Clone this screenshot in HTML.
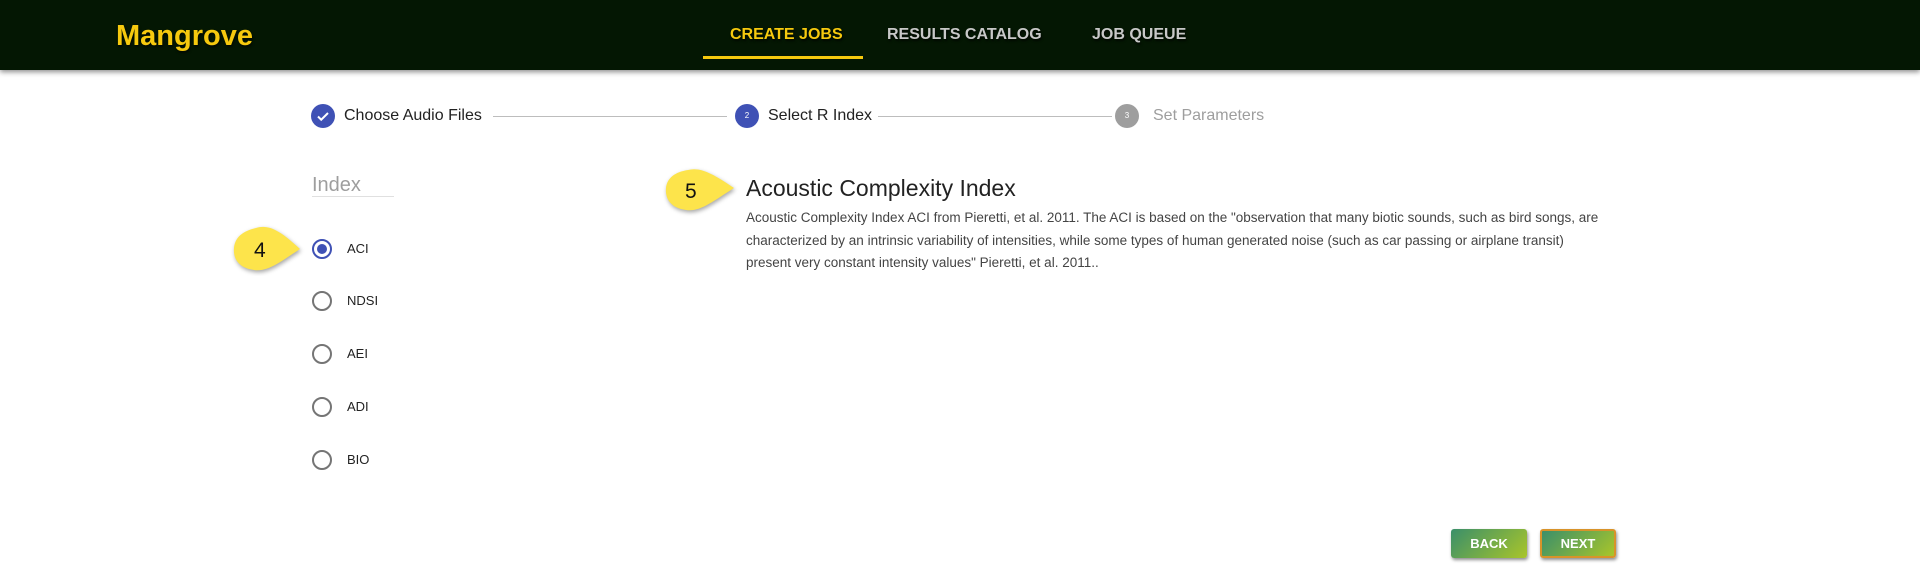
<!DOCTYPE html>
<html><head><meta charset="utf-8"><style>
*{margin:0;padding:0;box-sizing:border-box}
body{width:1920px;height:588px;background:#fff;font-family:"Liberation Sans",sans-serif;position:relative;overflow:hidden}
.hdr{position:absolute;left:0;top:0;width:1920px;height:70px;background:#041703;box-shadow:0 2px 5px rgba(0,0,0,.45)}
.logo{position:absolute;left:116px;top:20px;font-size:29px;font-weight:bold;color:#f6c90e;text-shadow:1px 2px 2px rgba(0,0,0,.6)}
.nav{position:absolute;top:26px;font-size:16px;font-weight:bold;color:#c8c8c8;text-shadow:1px 2px 2px rgba(0,0,0,.7)}
.ul{position:absolute;left:703px;top:56px;width:160px;height:3px;background:#f6c90e}
.ab{position:absolute}
.circ{position:absolute;width:24px;height:24px;border-radius:50%;color:#fff;font-size:8px;text-align:center;line-height:24px}
.step{position:absolute;top:107px;font-size:16px;color:#222}
.line{position:absolute;top:116px;height:1px;background:#bdbdbd}
.radio{position:absolute;left:312px;width:20px;height:20px;border:2px solid #757575;border-radius:50%}
.rl{position:absolute;left:347px;font-size:13px;color:#222}
.btn{position:absolute;top:529px;width:76px;height:29px;border-radius:3px;background:linear-gradient(135deg,#3a8f6a,#a9c52a);color:#fff;font-weight:bold;font-size:13px;text-align:center;line-height:29px;box-shadow:1px 2px 3px rgba(0,0,0,.45)}
</style></head><body>
<div class="hdr">
<div class="logo">Mangrove</div>
<div class="nav" style="left:730px;color:#f6c90e">CREATE JOBS</div>
<div class="nav" style="left:887px">RESULTS CATALOG</div>
<div class="nav" style="left:1092px">JOB QUEUE</div>
<div class="ul"></div>
</div>

<div class="circ" style="left:311px;top:104px;background:#3f51b5"><svg width="24" height="24" viewBox="0 0 24 24"><path d="M7 12.5l3.2 3.2L17 9" stroke="#fff" stroke-width="2" fill="none"/></svg></div>
<div class="step" style="left:344px">Choose Audio Files</div>
<div class="line" style="left:493px;width:234px"></div>
<div class="circ" style="left:735px;top:104px;background:#3f51b5">2</div>
<div class="step" style="left:768px">Select R Index</div>
<div class="line" style="left:878px;width:234px"></div>
<div class="circ" style="left:1115px;top:104px;background:#9e9e9e">3</div>
<div class="step" style="left:1153px;color:#9e9e9e">Set Parameters</div>

<div class="ab" style="left:312px;top:174px;font-size:20px;color:#9e9e9e">Index</div>
<div class="ab" style="left:312px;top:196px;width:82px;height:1px;background:#e0e0e0"></div>

<div class="radio" style="top:239px;border-color:#3f51b5"><div style="position:absolute;left:3px;top:3px;width:10px;height:10px;border-radius:50%;background:#3f51b5"></div></div>
<div class="rl" style="top:241px">ACI</div>
<div class="radio" style="top:291px"></div><div class="rl" style="top:293px">NDSI</div>
<div class="radio" style="top:344px"></div><div class="rl" style="top:346px">AEI</div>
<div class="radio" style="top:397px"></div><div class="rl" style="top:399px">ADI</div>
<div class="radio" style="top:450px"></div><div class="rl" style="top:452px">BIO</div>

<svg class="ab" style="left:228px;top:222px" width="80" height="54" viewBox="0 0 80 54"><path d="M28 6 C40 2 52 8 72 27 C52 40 40 50 26 48 C10 46 5 36 6 26 C7 15 15 9 28 6Z" fill="#fde44b" style="filter:drop-shadow(1px 2px 2px rgba(0,0,0,.35))"/><text x="26" y="35" font-size="21" font-family="Liberation Sans" fill="#111">4</text></svg>
<svg class="ab" style="left:660px;top:166px" width="82" height="52" viewBox="0 0 82 52"><path d="M28 4 C40 1 52 7 74 22 C52 36 40 46 26 44 C10 42 5 32 6 22 C7 12 15 6 28 4Z" fill="#fde44b" style="filter:drop-shadow(1px 2px 2px rgba(0,0,0,.35))"/><text x="25" y="32" font-size="21" font-family="Liberation Sans" fill="#111">5</text></svg>

<div class="ab" style="left:746px;top:175px;font-size:23px;color:#222">Acoustic Complexity Index</div>
<div class="ab" style="left:746px;top:207px;font-size:13.5px;line-height:22.5px;color:#444;white-space:nowrap">Acoustic Complexity Index ACI from Pieretti, et al. 2011. The ACI is based on the "observation that many biotic sounds, such as bird songs, are<br>characterized by an intrinsic variability of intensities, while some types of human generated noise (such as car passing or airplane transit)<br>present very constant intensity values" Pieretti, et al. 2011..</div>

<div class="btn" style="left:1451px">BACK</div>
<div class="btn" style="left:1540px;border:2px solid #d8932a;line-height:25px">NEXT</div>
</body></html>
